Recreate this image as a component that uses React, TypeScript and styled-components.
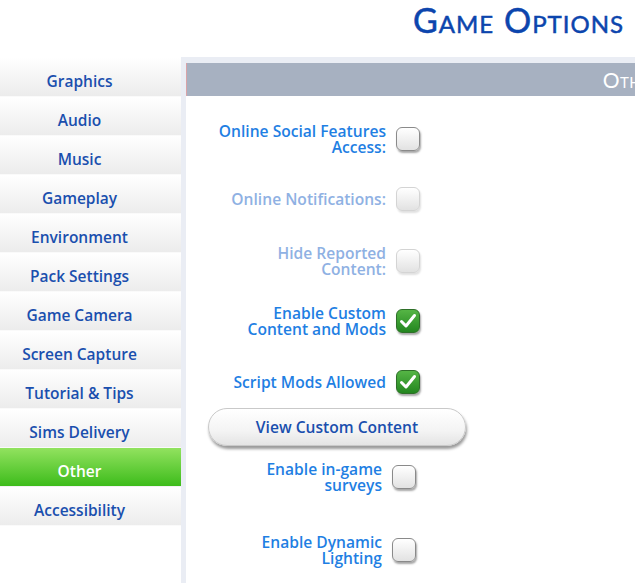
import React from 'react'
import styled, { createGlobalStyle, css } from 'styled-components'

const GlobalStyle = createGlobalStyle`
  html, body {
    margin: 0;
    padding: 0;
    background: #ffffff;
    overflow: hidden;
  }
  body {
    font-family: "Open Sans", "Liberation Sans", sans-serif;
  }
`

const BLUE_DARK = '#1a4fae'
const BLUE = '#1f7fe3'
const BLUE_FADED = '#8fb1e3'

const Page = styled.div`
  width: 635px;
  height: 583px;
  overflow: hidden;
  display: flex;
  flex-flow: column;
`

const TitleBar = styled.div`
  height: 57px;
  display: flex;
  justify-content: flex-end;
  padding-right: 11px;
  box-sizing: border-box;
`

const Title = styled.h1`
  margin: 0;
  font-family: "Lato", "Liberation Sans", sans-serif;
  font-weight: 400;
  font-size: 34px;
  font-variant: small-caps;
  letter-spacing: 1px;
  -webkit-text-stroke: 0.5px #0c45ad;
  color: #0c45ad;
  line-height: 40px;
`

const Body = styled.div`
  flex: 1;
  display: flex;
  min-height: 0;
`

const Sidebar = styled.nav`
  flex: none;
  width: 181px;
  padding-top: 1px;
  display: flex;
  flex-flow: column;
`

const NavItem = styled.div<{ $active?: boolean }>`
  height: 39px;
  display: flex;
  align-items: center;
  justify-content: center;
  padding: 8px 22px 0 0;
  font-size: 15.5px;
  font-weight: 600;
  color: ${BLUE_DARK};
  background: linear-gradient(#ffffff, #ececec);
  border-bottom: 1px solid #fafafa;
  box-sizing: border-box;
  ${({ $active }) => $active && css`
    color: #ffffff;
    background: linear-gradient(#92e25f, #3dbc1b);
    border-bottom-color: #f2f2f2;
  `}
`

const Panel = styled.section`
  flex: none;
  width: 903px;
  background: #eaedf4;
  padding: 6px 0 0 5px;
  box-sizing: border-box;
  display: flex;
  flex-flow: column;
`

const PanelHeader = styled.div`
  height: 33px;
  flex: none;
  background: #a7b1c1;
  border-left: 1px solid #d9a3a8;
  display: flex;
  align-items: center;
  justify-content: center;
  padding-right: 8px;
  color: #ffffff;
  font-family: "Lato", "Liberation Sans", sans-serif;
  font-size: 21px;
  font-variant: small-caps;
  letter-spacing: 0.5px;
`

const PanelBody = styled.div`
  flex: 1;
  background: #ffffff;
  display: flex;
  flex-flow: column;
`

const Row = styled.div<{ $top: number; $labelWidth?: number }>`
  margin-top: ${({ $top }) => $top}px;
  display: grid;
  grid-template-columns: ${({ $labelWidth }) => $labelWidth ?? 200}px 24px;
  column-gap: 10px;
  align-items: center;
`

const Label = styled.div<{ $disabled?: boolean }>`
  text-align: right;
  font-size: 15.6px;
  font-weight: 600;
  line-height: 16px;
  color: ${({ $disabled }) => ($disabled ? BLUE_FADED : BLUE)};
`

const Box = styled.div<{ $checked?: boolean; $disabled?: boolean }>`
  width: 24px;
  height: 24px;
  box-sizing: border-box;
  border-radius: 6px;
  display: flex;
  align-items: center;
  justify-content: center;
  background: linear-gradient(#ffffff, #e2e2e2);
  border: 1px solid #8a8a8a;
  box-shadow: 1px 2px 2px rgba(0, 0, 0, 0.35);
  ${({ $disabled }) => $disabled && css`
    border-color: #d4d4d4;
    box-shadow: 1px 2px 2px rgba(0, 0, 0, 0.12);
  `}
  ${({ $checked }) => $checked && css`
    background: linear-gradient(#55b545, #23861f);
    border-color: #2e6f28;
  `}
`

const Button = styled.button`
  margin: 14px 0 0 22px;
  width: 258px;
  height: 38px;
  border-radius: 19px;
  border: 1px solid #c9c9c9;
  background: linear-gradient(#ffffff 0%, #f4f4f4 60%, #e4e4e4 100%);
  box-shadow: 1px 3px 3px rgba(0, 0, 0, 0.4);
  font-family: "Open Sans", "Liberation Sans", sans-serif;
  font-size: 15.6px;
  font-weight: 600;
  color: ${BLUE_DARK};
  padding: 0;
`

function Check() {
  return (
    <svg width="18" height="16" viewBox="0 0 18 16">
      <path d="M2.5 8.5 L7 13 L15.5 2.5" fill="none" stroke="#ffffff" strokeWidth="3" strokeLinecap="round" strokeLinejoin="round" />
    </svg>
  )
}

type Setting = {
  label: string[]
  top: number
  checked?: boolean
  disabled?: boolean
  labelWidth?: number
}

const navItems = [
  'Graphics', 'Audio', 'Music', 'Gameplay', 'Environment', 'Pack Settings',
  'Game Camera', 'Screen Capture', 'Tutorial & Tips', 'Sims Delivery', 'Other', 'Accessibility',
]

const topSettings: Setting[] = [
  { label: ['Online Social Features', 'Access:'], top: 27 },
  { label: ['Online Notifications:'], top: 32, disabled: true },
  { label: ['Hide Reported', 'Content:'], top: 34, disabled: true },
  { label: ['Enable Custom', 'Content and Mods'], top: 28, checked: true },
  { label: ['Script Mods Allowed'], top: 33, checked: true },
]

const bottomSettings: Setting[] = [
  { label: ['Enable in-game', 'surveys'], top: 15, labelWidth: 196 },
  { label: ['Enable Dynamic', 'Lighting'], top: 41, labelWidth: 196 },
]

function SettingRow({ label, top, checked, disabled, labelWidth }: Setting) {
  return (
    <Row $top={top} $labelWidth={labelWidth}>
      <Label $disabled={disabled}>
        {label.map((line) => <div key={line}>{line}</div>)}
      </Label>
      <Box $checked={checked} $disabled={disabled}>{checked && <Check />}</Box>
    </Row>
  )
}

export default function App() {
  return (
    <Page>
      <GlobalStyle />
      <TitleBar>
        <Title>Game Options</Title>
      </TitleBar>
      <Body>
        <Sidebar>
          {navItems.map((item) => (
            <NavItem key={item} $active={item === 'Other'}>{item}</NavItem>
          ))}
        </Sidebar>
        <Panel>
          <PanelHeader>Other</PanelHeader>
          <PanelBody>
            {topSettings.map((s) => <SettingRow key={s.label[0]} {...s} />)}
            <Button>View Custom Content</Button>
            {bottomSettings.map((s) => <SettingRow key={s.label[0]} {...s} />)}
          </PanelBody>
        </Panel>
      </Body>
    </Page>
  )
}
